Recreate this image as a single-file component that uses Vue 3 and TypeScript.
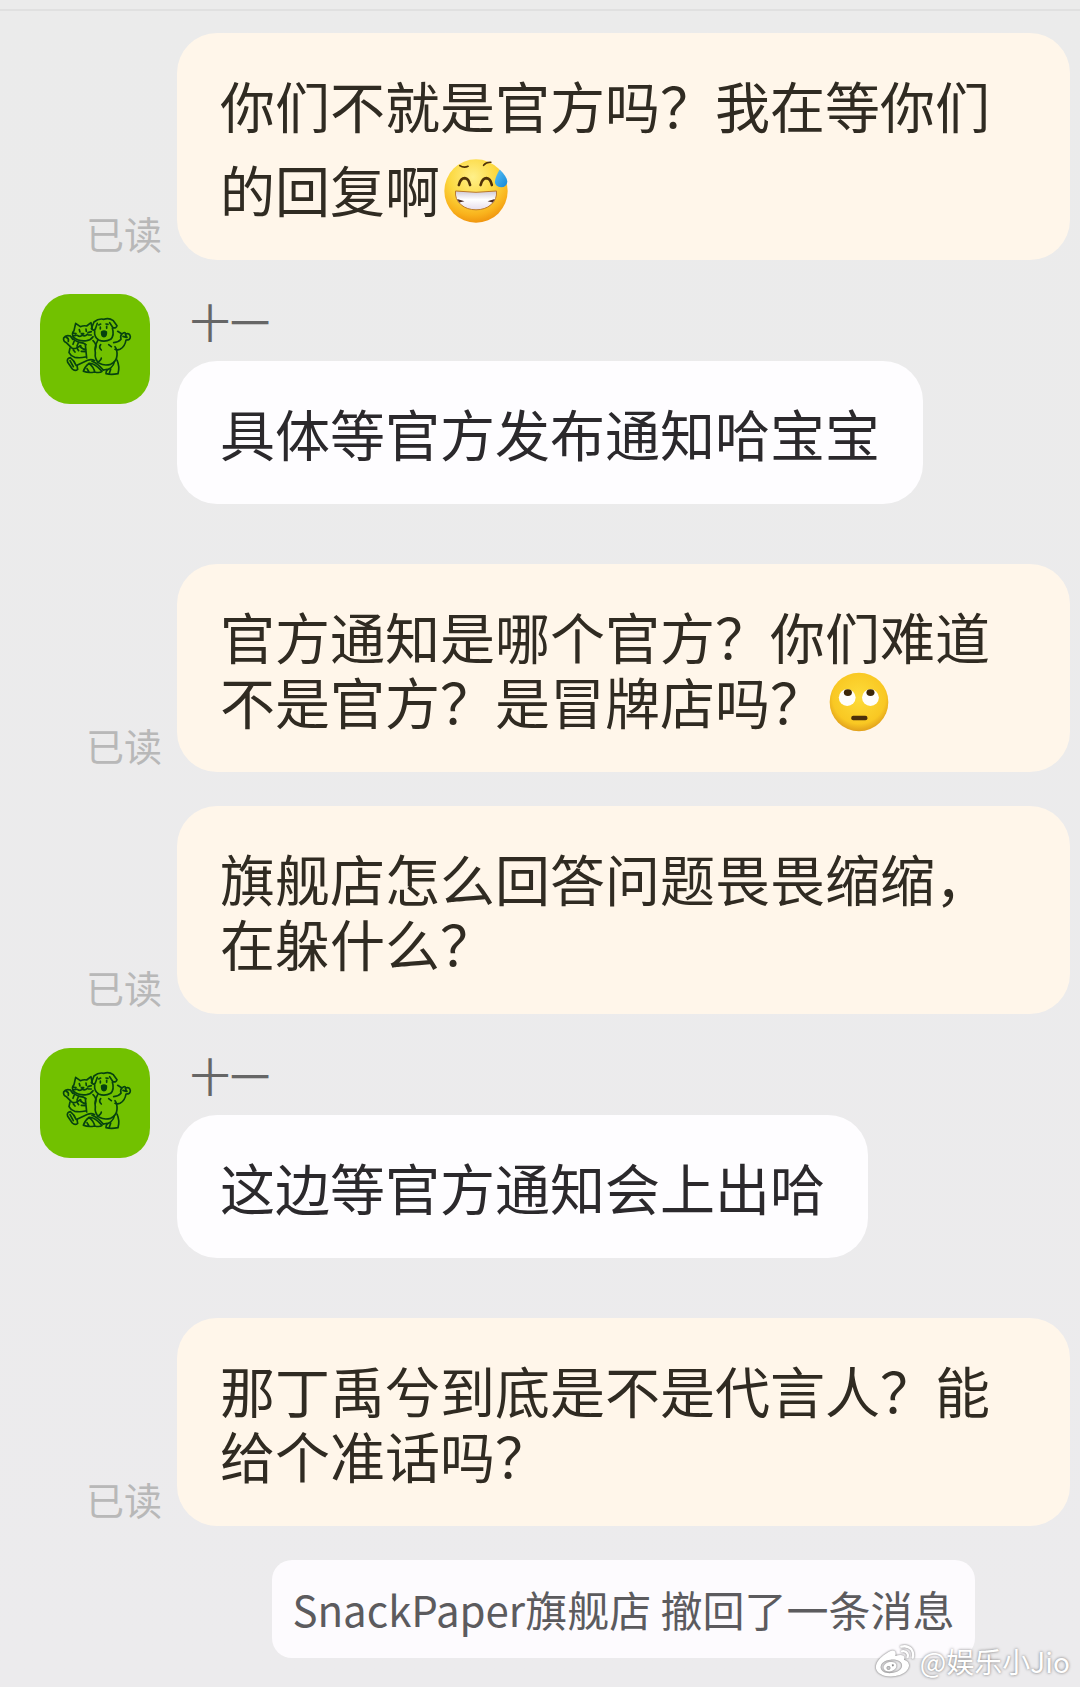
<script setup lang="ts">
type EmojiName = 'sweat' | 'roll'

interface Message {
  id: number
  from: 'me' | 'shop'
  text: string
  emoji?: EmojiName
}

const shopName = '十一'
const readLabel = '已读'
const notice = 'SnackPaper旗舰店 撤回了一条消息'
const watermark = '@娱乐小Jio'

const messages: Message[] = [
  { id: 1, from: 'me', text: '你们不就是官方吗？我在等你们的回复啊', emoji: 'sweat' },
  { id: 2, from: 'shop', text: '具体等官方发布通知哈宝宝' },
  { id: 3, from: 'me', text: '官方通知是哪个官方？你们难道不是官方？是冒牌店吗？', emoji: 'roll' },
  { id: 4, from: 'me', text: '旗舰店怎么回答问题畏畏缩缩，在躲什么？' },
  { id: 5, from: 'shop', text: '这边等官方通知会上出哈' },
  { id: 6, from: 'me', text: '那丁禹兮到底是不是代言人？能给个准话吗？' },
]
</script>

<template>
  <main class="chat" lang="zh-CN">
    <div class="topbar"></div>

    <ol class="thread">
      <li v-for="m in messages" :key="m.id" class="row" :class="m.from">
        <div class="side">
          <span v-if="m.from === 'me'" class="read">{{ readLabel }}</span>
          <svg v-else class="avatar" viewBox="60 38 330 330" role="img" :aria-label="shopName">
            <rect x="60" y="38" width="330" height="330" fill="#72c100" />
            <g fill="none" stroke="#06420f" stroke-width="5" stroke-linecap="round" stroke-linejoin="round">
              <!-- cat head -->
              <path d="M162 148 L167 126 L181 136 Q191 132 200 134 L213 124 L217 144 M162 148 Q153 158 162 169 Q176 181 200 178 Q212 176 219 166" />
              <path d="M178 145 l2 7 M198 143 l1 7 M172 162 q8 7 15 -1 q7 6 15 -2 M184 157 h7 M158 155 l10 2 M158 164 l10 -2 M204 154 l10 -3 M205 161 l9 0" />
              <!-- dog head -->
              <path d="M222 122 Q236 110 252 114 Q266 108 280 118 L291 133 Q288 142 279 139 L269 124 M222 122 L214 142 Q222 150 226 143 L232 126 M224 148 Q222 168 236 176 Q254 184 272 174 Q284 162 277 140" />
              <path d="M241 137 v6 M260 135 v6 M236 131 l6 -3 M258 128 l6 1" />
              <path d="M245 152 q7 -5 14 0 q1 14 -7 14 q-8 -1 -7 -14z" fill="#06420f" />
              <!-- raised right arm -->
              <path d="M281 184 Q296 183 303 174 Q300 162 306 158 L293 150 M306 158 Q314 150 318 158 Q329 154 331 166 Q331 176 318 176 Q315 196 300 204 Q292 207 285 204 M309 165 l10 3 M316 160 l5 8" />
              <!-- dog body -->
              <path d="M233 178 Q223 196 226 214 Q223 235 238 246 Q252 254 272 249 Q290 240 291 222 Q292 205 285 196 M242 190 q-7 8 2 16 M266 190 l8 6 M232 244 q12 -8 12 -14" />
              <!-- cat arm and body -->
              <path d="M158 174 L151 164 Q137 160 131 170 Q129 180 139 184 L154 199 Q160 204 168 201 L182 193 M139 168 q8 2 6 12 M151 164 Q164 180 182 184 Q190 184 198 190 M163 178 l-4 11 M176 182 l-5 12" />
              <path d="M150 200 L147 214 Q152 224 164 228 Q180 231 196 227 M180 194 Q186 204 198 205 M196 190 L200 230 M160 206 l5 6 M172 202 l4 6 M219 178 Q232 190 226 204 M184 210 l14 1" />
              <!-- feet -->
              <path d="M151 229 Q139 231 143 243 L157 263 Q165 271 173 264 L171 252 L203 237 Q214 232 224 238 M151 229 Q163 238 168 252 M150 238 l10 18" />
              <path d="M207 246 Q194 256 190 270 Q205 276 224 272 Q222 258 207 246 M207 246 Q222 244 246 270 Q240 276 224 272 M216 240 Q232 246 250 266 M201 262 l6 10" />
              <path d="M291 236 Q300 256 294 277 Q274 281 258 277 Q257 266 272 260 Q282 250 283 242 M272 264 l-4 12 M250 266 l12 -2" />
            </g>
          </svg>
        </div>
        <div class="body">
          <p v-if="m.from === 'shop'" class="name">{{ shopName }}</p>
          <p class="bubble">{{ m.text }}<svg
            v-if="m.emoji === 'sweat'" class="emoji sweat" viewBox="66 53 194 194" role="img" aria-label="尴尬笑"
          >
            <defs>
              <radialGradient id="face-warm" cx="0.45" cy="0.28" r="0.75">
                <stop offset="0" stop-color="#fff08a" />
                <stop offset="0.5" stop-color="#fcd83f" />
                <stop offset="0.8" stop-color="#f9b21c" />
                <stop offset="1" stop-color="#ee8f0c" />
              </radialGradient>
              <linearGradient id="teeth" x1="0" y1="0" x2="0" y2="1">
                <stop offset="0" stop-color="#cfc9d6" />
                <stop offset="0.45" stop-color="#ffffff" />
                <stop offset="1" stop-color="#e6dcea" />
              </linearGradient>
              <linearGradient id="drop" x1="0" y1="0" x2="1" y2="1">
                <stop offset="0" stop-color="#5cc3f5" />
                <stop offset="1" stop-color="#1286d8" />
              </linearGradient>
            </defs>
            <circle cx="163" cy="150" r="96" fill="url(#face-warm)" />
            <g fill="none" stroke="#4f3208" stroke-linecap="round">
              <path d="M114 73 Q126 81 139 75 M186 72 Q194 62 208 63" stroke-width="5" />
              <path d="M111 132 Q116 111 129 111 Q141 112 145 132 M177 132 Q182 111 195 111 Q207 112 211 132" stroke-width="8" />
            </g>
            <path d="M101 150 Q163 158 225 150 Q228 175 208 192 Q190 207 163 207 Q136 207 118 192 Q98 175 101 150z" fill="url(#teeth)" stroke="#b9782a" stroke-width="3" />
            <path d="M106 174 L128 181 L112 185z M220 174 L198 181 L214 185z" fill="#4a2a24" />
            <path d="M235 85 Q258 108 258 122 Q256 138 239 139 Q222 138 220 123 Q221 108 235 85z" fill="url(#drop)" />
          </svg><svg
            v-else-if="m.emoji === 'roll'" class="emoji roll" viewBox="67 38 178 178" role="img" aria-label="白眼"
          >
            <defs>
              <radialGradient id="face-flat" cx="0.5" cy="0.42" r="0.6">
                <stop offset="0" stop-color="#fddc3a" />
                <stop offset="0.75" stop-color="#f9c823" />
                <stop offset="1" stop-color="#dd9a1b" />
              </radialGradient>
            </defs>
            <circle cx="156" cy="127" r="87" fill="url(#face-flat)" />
            <circle cx="121" cy="114" r="25" fill="#fffefa" />
            <circle cx="190" cy="114" r="25" fill="#fffefa" />
            <ellipse cx="123" cy="99" rx="12" ry="10" fill="#3c2709" />
            <ellipse cx="190" cy="99" rx="12" ry="10" fill="#3c2709" />
            <rect x="133" y="168" width="48" height="13" rx="6" fill="#4b2f0a" />
          </svg></p>
        </div>
      </li>
    </ol>

    <div class="notice-row">
      <p class="notice">{{ notice }}</p>
    </div>

    <div class="watermark">
      <svg class="weibo" viewBox="584 308 120 100" aria-hidden="true">
        <path
          fill="#fff"
          fill-rule="evenodd"
          d="M620 334 C634 323 650 323 645 343 C662 336 677 340 671 354 C688 359 690 374 680 386 C666 403 634 408 612 402 C592 396 583 384 588 368 C592 355 604 344 620 334z M631 354 C612 355 600 366 601 378 C603 390 617 396 635 394 C655 391 667 381 665 369 C662 358 649 353 631 354z"
        />
        <path
          fill="#fff"
          fill-rule="evenodd"
          d="M633 361 C646 360 652 370 646 380 C640 389 626 392 616 387 C607 381 608 372 616 366 C621 362 627 361 633 361z M624 373 a6 6 0 1 0 1 0z M637 368 a3 3 0 1 0 1 0z"
        />
        <path d="M663 315 Q682 310 693 323 Q701 334 697 348 M665 329 Q676 327 681 335 Q684 340 682 346" fill="none" stroke="#fff" stroke-width="7" stroke-linecap="round" />
      </svg>
      <span>{{ watermark }}</span>
    </div>
  </main>
</template>

<style>
body {
  margin: 0;
  background: #ecebed;
}
</style>

<style scoped>
.chat {
  position: relative;
  box-sizing: border-box;
  min-height: 100vh;
  padding-bottom: 28px;
  background: linear-gradient(#ebebeb, #ecebed);
  font-family: "Noto Sans CJK SC", "Noto Sans", sans-serif;
}

.topbar {
  height: 9px;
  border-bottom: 2px solid #e0e0e0;
}

.thread {
  display: flex;
  flex-direction: column;
  gap: 34px;
  margin: 0;
  padding: 22px 10px 34px 0;
  list-style: none;
}

.row {
  display: flex;
}

.shop {
  margin-bottom: 26px;
}

.side {
  display: flex;
  flex: 0 0 177px;
  box-sizing: border-box;
  justify-content: flex-end;
}

.me .side {
  align-items: flex-end;
  padding: 0 15px 0 0;
}

.shop .side {
  align-items: flex-start;
  padding-right: 27px;
}

.read {
  color: #b8b8b8;
  font-size: 38px;
  line-height: 54px;
}

.avatar {
  display: block;
  width: 110px;
  height: 110px;
  border-radius: 30px;
}

.body {
  flex: 1;
  min-width: 0;
}

.name {
  height: 67px;
  margin: 0;
  padding-left: 13px;
  color: #666;
  font-size: 40px;
  line-height: 54px;
  box-sizing: border-box;
}

.bubble {
  box-sizing: border-box;
  margin: 0;
  padding: 39px 43px;
  border-radius: 40px;
  font-size: 55px;
  line-height: 65px;
}

.me .bubble {
  background: #fff6ea;
  color: #302b22;
}

.shop .bubble {
  width: fit-content;
  background: #fefdff;
  color: #2b292c;
}

.emoji {
  display: inline-block;
  margin-left: 4px;
}

.sweat {
  width: 64px;
  height: 64px;
  margin-top: 22px;
  margin-bottom: -3px;
  vertical-align: -8px;
}

.roll {
  width: 60px;
  height: 60px;
  margin-top: -4px;
  vertical-align: -8px;
}

.notice-row {
  display: flex;
  justify-content: center;
  padding: 0 10px 0 177px;
}

.notice {
  margin: 0;
  padding: 19px 20px;
  border-radius: 20px;
  background: #fdfbfe;
  color: #5c5b5e;
  font-size: 42px;
  line-height: 60px;
}

.watermark {
  position: absolute;
  right: 10px;
  bottom: 6px;
  display: flex;
  align-items: center;
  gap: 5px;
  color: #fff;
  font-size: 28px;
  line-height: 40px;
  text-shadow: 0 0 3px rgba(0, 0, 0, 0.55);
}

.weibo {
  width: 40px;
  height: 34px;
  overflow: visible;
  filter: drop-shadow(0 0 1px rgba(0, 0, 0, 0.6));
}
</style>
